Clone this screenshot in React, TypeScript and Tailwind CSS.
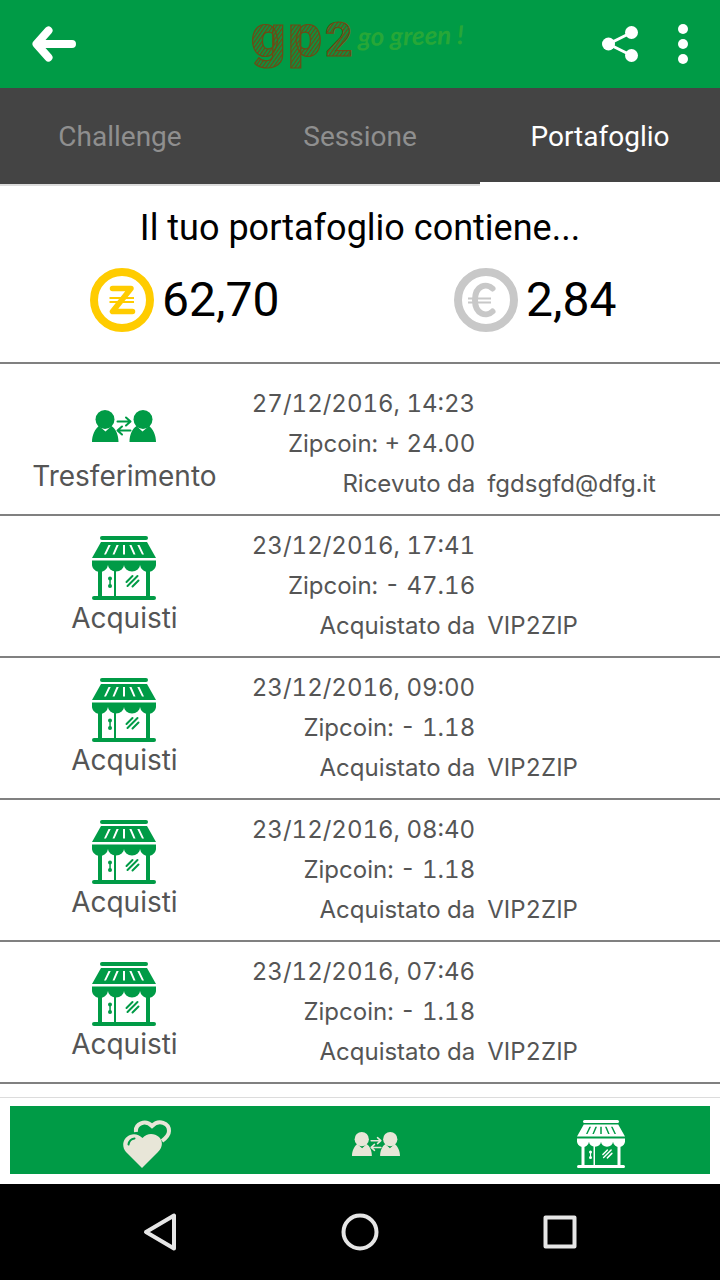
import type { ReactNode } from 'react'

type Kind = 'transfer' | 'purchase'

const tabs = ['Challenge', 'Sessione', 'Portafoglio']

const movements: { kind: Kind; label: string; date: string; amount: string; action: string; who: string }[] = [
  { kind: 'transfer', label: 'Tresferimento', date: '27/12/2016, 14:23', amount: '+ 24.00', action: 'Ricevuto da', who: 'fgdsgfd@dfg.it' },
  { kind: 'purchase', label: 'Acquisti', date: '23/12/2016, 17:41', amount: '- 47.16', action: 'Acquistato da', who: 'VIP2ZIP' },
  { kind: 'purchase', label: 'Acquisti', date: '23/12/2016, 09:00', amount: '- 1.18', action: 'Acquistato da', who: 'VIP2ZIP' },
  { kind: 'purchase', label: 'Acquisti', date: '23/12/2016, 08:40', amount: '- 1.18', action: 'Acquistato da', who: 'VIP2ZIP' },
  { kind: 'purchase', label: 'Acquisti', date: '23/12/2016, 07:46', amount: '- 1.18', action: 'Acquistato da', who: 'VIP2ZIP' },
]

function TransferIcon({ className }: { className: string }) {
  return (
    <svg viewBox="0 0 64 64" className={className} fill="currentColor" aria-hidden="true">
      <circle cx="13" cy="25.500" r="9.500" />
      <path d="M0 48C0 41 3 35 7 32L13.500 37.500L19.500 32C24 35 26.500 41 26.500 48Z" />
      <circle cx="51" cy="25.500" r="9.500" />
      <path d="M37.500 48C37.500 41 40 35 44.500 32L50.500 37.500L57 32C61 35 64 41 64 48Z" />
      <g fill="none" stroke="currentColor" strokeWidth="2" strokeLinecap="round" strokeLinejoin="round">
        <path d="M25.500 27.500H38M34 23.500L38.500 27.500L34 31.500" />
        <path d="M38.500 36.500H26M30 32.500L25.500 36.500L30 40.500" />
      </g>
    </svg>
  )
}

function ShopIcon({ className }: { className: string }) {
  return (
    <svg viewBox="0 0 64 64" className={className} fill="currentColor" aria-hidden="true">
      <rect x="8" y="0" width="48" height="4" rx="2" />
      {/* awning, with its stripes left open */}
      <path
        fillRule="evenodd"
        d="M9 6H55L64 22H0ZM16.500 9L12 18.500H14L18.700 9ZM24.500 9L20.500 18.500H22.500L26.700 9ZM31 9V18.500H33V9ZM37.300 9L41.500 18.500H43.500L39.500 9ZM45.300 9L50 18.500H52L47.500 9Z"
      />
      <path d="M0 24.500H64V27A8 8 0 0 1 48 29A8 6.500 0 0 1 32 29A8 6.500 0 0 1 16 29A8 8 0 0 1 0 27Z" />
      <rect x="6" y="33" width="4" height="28" />
      <rect x="22" y="33" width="2" height="28" />
      <rect x="54" y="33" width="4" height="28" />
      <rect x="0" y="60" width="64" height="4" rx="2" />
      <circle cx="18" cy="42.500" r="2" />
      <circle cx="18" cy="50" r="2" />
      <rect x="17.300" y="42" width="1.500" height="8" />
      <path d="M34.500 46L40.500 40M35.500 50L45.500 40M40.500 50.500L46.500 44.500" stroke="currentColor" strokeWidth="2" strokeLinecap="round" />
    </svg>
  )
}

function HeartsIcon({ className }: { className: string }) {
  return (
    <svg viewBox="0 0 48 48" className={className} aria-hidden="true">
      <path
        d="M13 12C12 4 22-1 29 6C36-1 46 3 46 11C46 15 43 18 39 21"
        fill="none"
        stroke="currentColor"
        strokeWidth="4"
      />
      <path
        d="M19 48L3 32C-2 26 0 18 7 15C12 13 16 15 19.500 18C24 13 31 13 36 17C40 21 40 27 35 32Z"
        fill="currentColor"
      />
      <path d="M5.500 24.500C6 21 8 19 11.500 18.500" fill="none" stroke="#009b46" strokeWidth="2" strokeLinecap="round" />
    </svg>
  )
}

function ZipcoinIcon() {
  return (
    <svg viewBox="0 0 64 64" className="size-16 text-[#ffcc00]" fill="none" stroke="currentColor" aria-hidden="true">
      <circle cx="32" cy="32" r="28" strokeWidth="8" />
      <path d="M22.500 20.500H41L22.500 43.500H42.500" strokeWidth="5.500" strokeLinecap="round" strokeLinejoin="round" />
      <path d="M19.500 30H44M19.500 34H44" strokeWidth="2" />
    </svg>
  )
}

function EuroIcon() {
  return (
    <svg viewBox="0 0 64 64" className="size-16 text-[#c8c8c8]" fill="none" stroke="currentColor" aria-hidden="true">
      <circle cx="32" cy="32" r="28" strokeWidth="8" />
      <path d="M38.500 20.500C33 15 21 17 21 32C21 47 33 49 38.500 43.500" strokeWidth="6" strokeLinecap="round" />
      <path d="M14 30.500H37M14 34.500H37" strokeWidth="2" />
    </svg>
  )
}

function Logo() {
  return (
    <svg viewBox="0 0 220 88" className="h-22 w-[220px]" role="img" aria-label="gp2 go green!">
      <defs>
        <pattern id="hatch" width="3" height="3" patternUnits="userSpaceOnUse" patternTransform="rotate(35)">
          <rect width="1.400" height="3" fill="#6d4a14" />
        </pattern>
      </defs>
      <g fill="url(#hatch)" stroke="#6d4a14" strokeWidth="1.200" fontFamily="Roboto, sans-serif">
        <text x="1" y="56" fontSize="60" fontWeight="900">g</text>
        <text x="38" y="56" fontSize="60" fontWeight="900">p</text>
        <text x="75" y="56" fontSize="48" fontWeight="700">2</text>
      </g>
      <text x="108" y="46" fontSize="26" fontFamily="Lato, sans-serif" fontStyle="italic" fontWeight="700" fill="#27a737" transform="rotate(-1 108 46)">
        go green !
      </text>
    </svg>
  )
}

function Balance({ icon, value }: { icon: ReactNode; value: string }) {
  return (
    <div className="flex items-center gap-2 pl-[90px]">
      {icon}
      <span className="text-5xl leading-16">{value}</span>
    </div>
  )
}

export default function App() {
  return (
    <div className="flex min-h-screen flex-col bg-white font-[Roboto,sans-serif] text-black">
      <header className="grid h-22 grid-cols-[1fr_auto_1fr] items-center bg-[#009b46] text-white">
        <button aria-label="Indietro" className="w-fit pl-8">
          <svg viewBox="0 0 44 36" className="h-9 w-11" fill="none" stroke="currentColor" strokeWidth="8" strokeLinecap="round" strokeLinejoin="round">
            <path d="M40 18H6M16.500 4.500L4.500 18L16.500 31.500" />
          </svg>
        </button>
        <Logo />
        <div className="flex items-center justify-end gap-10 pr-8">
          <button aria-label="Condividi">
            <svg viewBox="0 0 36 36" className="size-9" fill="currentColor">
              <path d="M29.500 6.500L6.500 18L29.500 29.500" fill="none" stroke="currentColor" strokeWidth="3" />
              <circle cx="6.500" cy="18" r="6.500" />
              <circle cx="29.500" cy="6.500" r="6.500" />
              <circle cx="29.500" cy="29.500" r="6.500" />
            </svg>
          </button>
          <button aria-label="Menu">
            <svg viewBox="0 0 10 40" className="h-10 w-2.5 overflow-visible" fill="currentColor">
              <circle cx="5" cy="5" r="5" />
              <circle cx="5" cy="20" r="5" />
              <circle cx="5" cy="35" r="5" />
            </svg>
          </button>
        </div>
      </header>

      <nav role="tablist" className="grid h-24 grid-cols-3 bg-[#444444] text-[28px]">
        {tabs.map((tab) => (
          <button
            key={tab}
            role="tab"
            aria-selected={tab === 'Portafoglio'}
            className="border-b-2 border-[#444444] pt-1 text-[#8f8f8f] aria-selected:border-white aria-selected:text-white"
          >
            {tab}
          </button>
        ))}
      </nav>

      <section className="border-b-2 border-[#808080] pb-7.5">
        <div className="mr-[33.333%] h-0.5 bg-[#dcdcdc]" />
        <h1 className="pt-[18px] pb-4 text-center text-4xl leading-12">Il tuo portafoglio contiene...</h1>
        <div className="grid grid-cols-2 gap-x-2">
          <Balance icon={<ZipcoinIcon />} value="62,70" />
          <Balance icon={<EuroIcon />} value="2,84" />
        </div>
      </section>

      <ul className="flex-1 font-[Inter,sans-serif] text-[#555555] tabular-nums">
        {movements.map((m) => (
          <li key={m.date} className="grid grid-cols-[34%_32%_1fr] border-b-2 border-[#808080] py-2.5 first:pt-5">
            <div className="flex flex-col items-center pt-2.5 pl-1">
              {m.kind === 'transfer' ? (
                <TransferIcon className="size-16 text-[#009b46]" />
              ) : (
                <ShopIcon className="size-16 text-[#009b46]" />
              )}
              <span className="text-[28px] leading-9">{m.label}</span>
            </div>
            <div className="text-right text-2xl leading-10">
              <p>{m.date}</p>
              <p>Zipcoin: {m.amount}</p>
              <p>{m.action}</p>
            </div>
            <p className="self-end pl-3 text-2xl leading-10">{m.who}</p>
          </li>
        ))}
      </ul>

      <footer className="border-t border-[#dcdcdc] px-2.5 pt-2 pb-2.5">
        <div className="grid h-17 grid-cols-3 items-center bg-[#009b46] text-[#e8e6d8]">
          <button aria-label="Preferiti" className="flex justify-center pt-2 pl-10">
            <HeartsIcon className="size-12" />
          </button>
          <button aria-label="Trasferimenti" className="flex justify-center pt-2 pl-8">
            <TransferIcon className="size-12" />
          </button>
          <button aria-label="Acquisti" className="flex justify-center pt-2 pl-4 text-white">
            <ShopIcon className="size-12" />
          </button>
        </div>
      </footer>

      <nav className="flex h-24 items-center justify-center gap-40 bg-black text-[#e6e6e6]">
        <button aria-label="Back">
          <svg viewBox="0 0 40 40" className="size-10" fill="none" stroke="currentColor" strokeWidth="4" strokeLinejoin="round">
            <path d="M34 3.500V36.500L6 20Z" />
          </svg>
        </button>
        <button aria-label="Home">
          <svg viewBox="0 0 40 40" className="size-10" fill="none" stroke="currentColor" strokeWidth="4">
            <circle cx="20" cy="20" r="16.500" />
          </svg>
        </button>
        <button aria-label="Recenti">
          <svg viewBox="0 0 40 40" className="size-10" fill="none" stroke="currentColor" strokeWidth="4" strokeLinejoin="round">
            <rect x="5.500" y="5.500" width="29" height="29" />
          </svg>
        </button>
      </nav>
    </div>
  )
}
